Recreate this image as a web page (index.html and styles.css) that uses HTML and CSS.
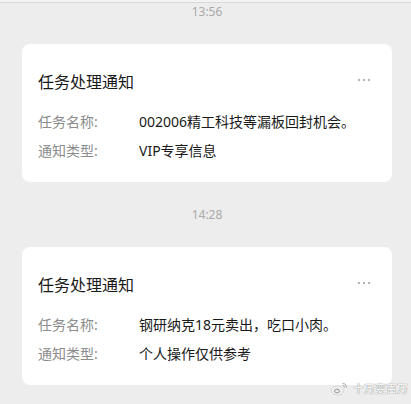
FILE: index.html
```html
<!DOCTYPE html>
<html lang="zh-CN">
<head>
    <meta charset="UTF-8">
    <meta name="viewport" content="width=device-width, initial-scale=1.0">
    <title>任务处理通知</title>
    <link rel="stylesheet" href="styles.css">
</head>
<body>
    <div class="top-bar"></div>

    <div class="chat">
        <div class="time first">13:56</div>
        <div class="card">
            <div class="card-head">
                <span class="card-title">任务处理通知</span>
                <span class="more"><i></i><i></i><i></i></span>
            </div>
            <div class="row">
                <span class="label">任务名称:</span>
                <span class="value">002006精工科技等漏板回封机会。</span>
            </div>
            <div class="row">
                <span class="label">通知类型:</span>
                <span class="value">VIP专享信息</span>
            </div>
        </div>

        <div class="time">14:28</div>
        <div class="card">
            <div class="card-head">
                <span class="card-title">任务处理通知</span>
                <span class="more"><i></i><i></i><i></i></span>
            </div>
            <div class="row">
                <span class="label">任务名称:</span>
                <span class="value">钢研纳克18元卖出，吃口小肉。</span>
            </div>
            <div class="row">
                <span class="label">通知类型:</span>
                <span class="value">个人操作仅供参考</span>
            </div>
        </div>
    </div>

    <!-- watermark -->
    <div class="watermark">
        <svg width="18" height="14" viewBox="0 0 18 14">
            <ellipse cx="7.5" cy="8.5" rx="6.5" ry="4.6" fill="none" stroke="#fff" stroke-width="1.6"/>
            <ellipse cx="7.5" cy="8.5" rx="6.5" ry="4.6" fill="none" stroke="#aaa" stroke-width="0.6"/>
            <ellipse cx="7" cy="9" rx="2.4" ry="1.8" fill="none" stroke="#999" stroke-width="1"/>
            <path d="M12.5 1.5 A4 4 0 0 1 16.5 5.5" fill="none" stroke="#aaa" stroke-width="1.2"/>
            <path d="M12.5 3.5 A2 2 0 0 1 14.5 5.5" fill="none" stroke="#aaa" stroke-width="1"/>
        </svg>
        <span>十万变百万</span>
    </div>
</body>
</html>
```

FILE: styles.css
```css
body {
    margin: 0;
    background-color: #ededed;
    font-family: "Noto Sans", "Noto Sans CJK SC", sans-serif;
    color: #191919;
    position: relative;
    height: 404px;
    overflow: hidden;
}
.top-bar {
    height: 2px;
    background-color: #f3f3f3;
    border-bottom: 1px solid #d9d9d9;
}
.chat {
    padding: 0 19px 0 22px;
}
.time {
    text-align: center;
    font-size: 12px;
    line-height: 18px;
    color: #a9a9a9;
    padding: 24px 0 23px;
}
.time.first {
    padding-top: 0;
}
.card {
    background-color: #fff;
    border-radius: 8px;
    padding: 26px 22px 17px 16px;
}
.card-head {
    display: flex;
    justify-content: space-between;
    align-items: center;
    height: 24px;
    margin-bottom: 13px;
}
.card-title {
    font-size: 16px;
    line-height: 24px;
}
.more {
    display: flex;
    gap: 3px;
    margin-top: -4px;
}
.more i {
    width: 2px;
    height: 2px;
    border-radius: 50%;
    background-color: #9a9a9a;
}
.row {
    display: flex;
    font-size: 14px;
    line-height: 29px;
}
.label {
    width: 101px;
    flex-shrink: 0;
    color: #8c8c8c;
}
.value {
    color: #191919;
}
.watermark {
    position: absolute;
    left: 330px;
    top: 382px;
    display: flex;
    align-items: center;
    gap: 5px;
    font-size: 11px;
    line-height: 14px;
    color: #fff;
    text-shadow: 0 0 1px #888, 0 0 1px #888;
}
```
